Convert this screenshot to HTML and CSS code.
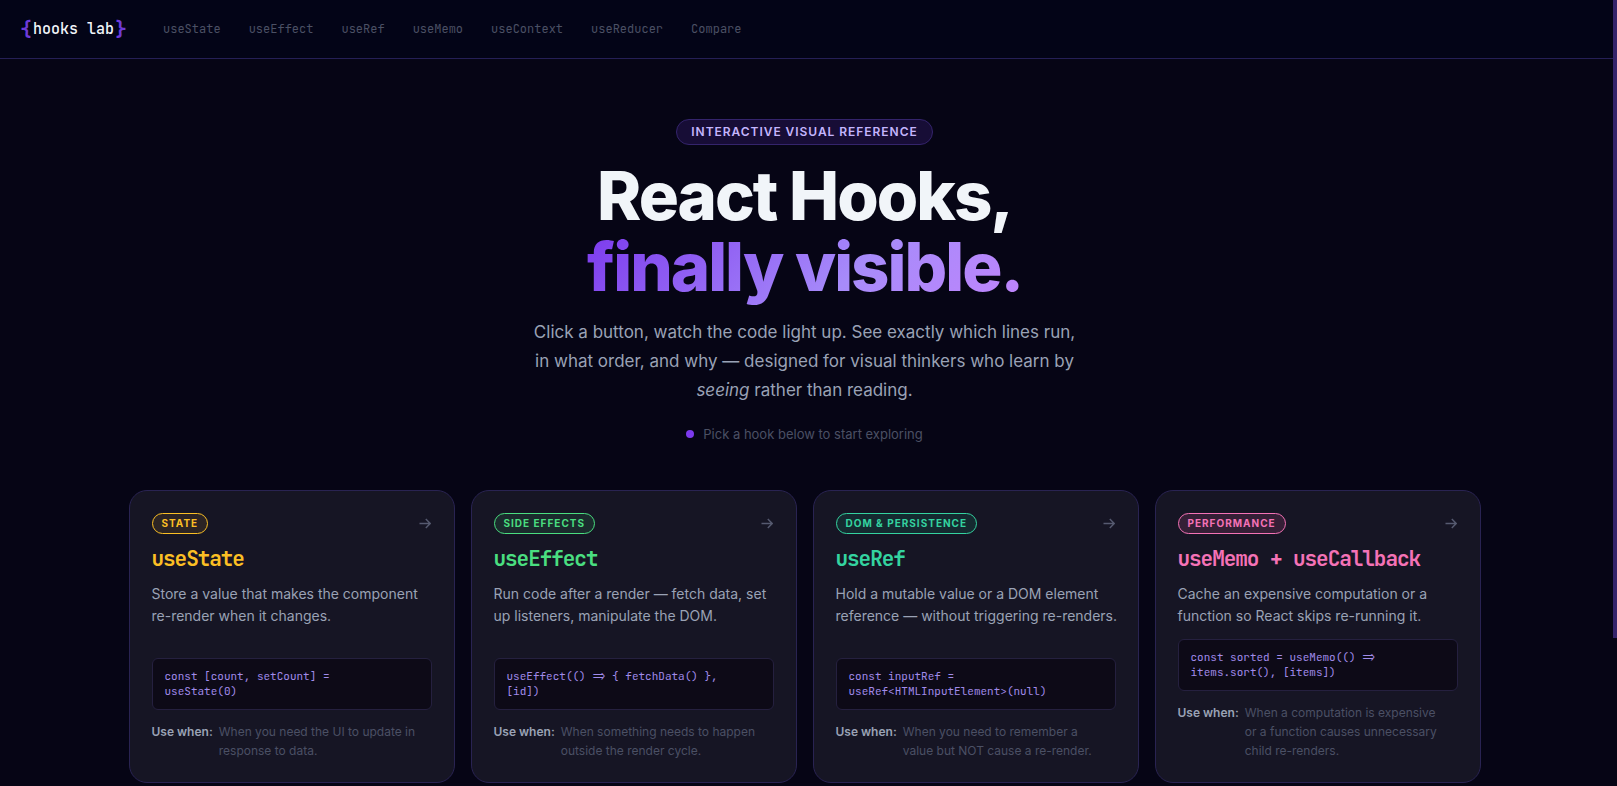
FILE: index.html
```html
<!DOCTYPE html>
<html lang="en">
<head>
<meta charset="utf-8">
<meta name="viewport" content="width=device-width, initial-scale=1">
<title>hooks lab</title>
<link rel="stylesheet" href="styles.css">
</head>
<body>
<header class="topbar">
  <a class="logo" href="#"><span class="brace">{</span><span>hooks lab</span><span class="brace">}</span></a>
  <nav class="nav">
    <a href="#state">useState</a>
    <a href="#effect">useEffect</a>
    <a href="#ref">useRef</a>
    <a href="#memo">useMemo</a>
    <a href="#context">useContext</a>
    <a href="#reducer">useReducer</a>
    <a href="#compare">Compare</a>
  </nav>
</header>
<main class="page">
  <section class="hero">
    <span class="eyebrow">INTERACTIVE VISUAL REFERENCE</span>
    <h1>React Hooks,<br><span class="gradient">finally visible.</span></h1>
    <p class="lead">Click a button, watch the code light up. See exactly which lines run, in what order, and why — designed for visual thinkers who learn by <em>seeing</em> rather than reading.</p>
    <p class="hint"><span class="dot"></span>Pick a hook below to start exploring</p>
  </section>
  <section class="cards">
    <a class="card amber" id="state" href="#state">
      <div class="card-top"><span class="tag">STATE</span><svg class="arrow" viewBox="0 0 12 12"><path d="M0.5 5.5H11M6.8 1L11.2 5.5L6.8 10"/></svg></div>
      <h2>useState</h2>
      <p class="desc">Store a value that makes the component<br>re-render when it changes.</p>
      <code>const [count, setCount] =
useState(0)</code>
      <div class="use"><strong>Use when:</strong><span>When you need the UI to update in<br>response to data.</span></div>
    </a>
    <a class="card green" id="effect" href="#effect">
      <div class="card-top"><span class="tag">SIDE EFFECTS</span><svg class="arrow" viewBox="0 0 12 12"><path d="M0.5 5.5H11M6.8 1L11.2 5.5L6.8 10"/></svg></div>
      <h2>useEffect</h2>
      <p class="desc">Run code after a render — fetch data, set<br>up listeners, manipulate the DOM.</p>
      <code>useEffect(() =&gt; { fetchData() },
[id])</code>
      <div class="use"><strong>Use when:</strong><span>When something needs to happen<br>outside the render cycle.</span></div>
    </a>
    <a class="card teal" id="ref" href="#ref">
      <div class="card-top"><span class="tag">DOM &amp; PERSISTENCE</span><svg class="arrow" viewBox="0 0 12 12"><path d="M0.5 5.5H11M6.8 1L11.2 5.5L6.8 10"/></svg></div>
      <h2>useRef</h2>
      <p class="desc">Hold a mutable value or a DOM element<br>reference — without triggering re-renders.</p>
      <code>const inputRef =
useRef&lt;HTMLInputElement&gt;(null)</code>
      <div class="use"><strong>Use when:</strong><span>When you need to remember a<br>value but NOT cause a re-render.</span></div>
    </a>
    <a class="card pink" id="memo" href="#memo">
      <div class="card-top"><span class="tag">PERFORMANCE</span><svg class="arrow" viewBox="0 0 12 12"><path d="M0.5 5.5H11M6.8 1L11.2 5.5L6.8 10"/></svg></div>
      <h2>useMemo + useCallback</h2>
      <p class="desc">Cache an expensive computation or a<br>function so React skips re-running it.</p>
      <code>const sorted = useMemo(() =&gt;
items.sort(), [items])</code>
      <div class="use"><strong>Use when:</strong><span>When a computation is expensive<br>or a function causes unnecessary<br>child re-renders.</span></div>
    </a>
  </section>
</main>
<div class="scroll-thumb"></div>
</body>
</html>
```
FILE: styles.css
```css
:root {
  --mono: "JetBrains Mono", "DejaVu Sans Mono", monospace;
  --muted: #4b5064;
  --text: #9aa2b5;
}
* { box-sizing: border-box; }
body {
  margin: 0;
  background: #060515;
  color: var(--text);
  font-family: Inter, sans-serif;
}
a { color: inherit; text-decoration: none; }
h1, h2, p { margin: 0; }

.topbar {
  display: flex;
  align-items: center;
  gap: 36px;
  height: 59px;
  padding: 0 20px;
  background: #030417;
  border-bottom: 1px solid #251f56;
  font-family: var(--mono);
}
.logo {
  display: flex;
  align-items: center;
  gap: 1px;
  font-size: 15px;
  font-weight: 500;
  color: #f1f5f9;
}
.brace { color: #6d3bd8; font-size: 20px; font-weight: 700; }
.nav { display: flex; gap: 28px; font-size: 12px; color: var(--muted); }

.page {
  max-width: 1408px;
  margin: 0 auto;
  padding: 60px 32px 4px 24px;
}
.hero {
  display: flex;
  flex-direction: column;
  align-items: center;
  text-align: center;
}
.eyebrow {
  padding: 0 14px;
  border: 1px solid #34246c;
  border-radius: 13px;
  background: #170d36;
  color: #c4b5fd;
  font-size: 12px;
  font-weight: 600;
  line-height: 24px;
  letter-spacing: 0.08em;
}
h1 {
  margin-top: 15px;
  color: #f1f5f9;
  font-size: 67px;
  font-weight: 800;
  line-height: 71px;
  letter-spacing: -0.03em;
}
.gradient {
  display: inline-block;
  padding-bottom: 8px;
  margin-bottom: -8px;
  background: linear-gradient(135deg, #7c3aed, #a78bfa 60%, #c084fc);
  -webkit-background-clip: text;
  background-clip: text;
  color: transparent;
}
.lead {
  max-width: 560px;
  margin-top: 16px;
  font-size: 17px;
  line-height: 29px;
}
.hint {
  display: flex;
  align-items: center;
  gap: 9px;
  margin-top: 17px;
  color: var(--muted);
  font-size: 13px;
  line-height: 24px;
}
.dot { width: 8px; height: 8px; border-radius: 50%; background: #7c3aed; }

.cards {
  display: grid;
  grid-template-columns: repeat(auto-fit, minmax(300px, 1fr));
  gap: 16px;
  margin-top: 44px;
}
.card {
  display: flex;
  flex-direction: column;
  gap: 12px;
  padding: 22px;
  border: 1px solid #292352;
  border-radius: 18px;
  background: #161524;
}
.card-top { display: flex; align-items: center; justify-content: space-between; }
.tag {
  padding: 0 9px;
  border: 1px solid var(--accent);
  border-radius: 11px;
  background: var(--tint);
  color: var(--accent);
  font-size: 10px;
  font-weight: 700;
  line-height: 19px;
  letter-spacing: 0.1em;
}
.arrow { width: 12px; height: 12px; margin-right: 1px; fill: none; stroke: #565a70; stroke-width: 1.4; }
h2 {
  color: var(--accent);
  font-family: var(--mono);
  font-size: 21px;
  font-weight: 700;
  line-height: 25px;
  letter-spacing: -0.05em;
}
.desc { flex: 1; font-size: 14px; line-height: 22px; white-space: nowrap; }
code {
  padding: 10px 12px;
  border: 1px solid #25203f;
  border-radius: 6px;
  background: #0d0a17;
  color: #a18bea;
  font-family: var(--mono);
  font-size: 11px;
  line-height: 15px;
  white-space: pre-wrap;
}
.use { display: flex; gap: 6px; color: var(--muted); font-size: 12px; line-height: 19px; }
.use strong { flex: none; color: var(--text); font-weight: 600; }

.amber { --accent: #fbbf24; --tint: #2c2424; }
.green { --accent: #4ade80; --tint: #1b2b2d; }
.teal { --accent: #34d3a0; --tint: #152a30; }
.pink { --accent: #f472b6; --tint: #351f36; }

.scroll-thumb {
  position: fixed;
  top: 0;
  right: 0;
  width: 4px;
  height: 81.2vh;
  background: #35246a;
}
```
